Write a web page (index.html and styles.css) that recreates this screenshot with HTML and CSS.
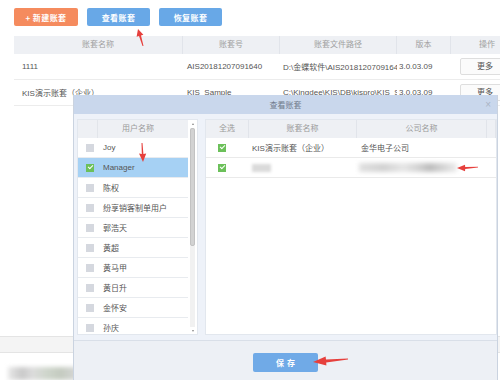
FILE: index.html
```html
<!DOCTYPE html>
<html lang="zh-CN">
<head>
<meta charset="utf-8">
<title>账套管理</title>
<link rel="stylesheet" href="styles.css">
</head>
<body>
<div class="page">
  <div class="toolbar">
    <button class="btn btn-orange">+ 新建账套</button>
    <button class="btn btn-blue">查看账套</button>
    <button class="btn btn-blue">恢复账套</button>
  </div>
  <div class="grid">
    <div class="grid-head">
      <span>账套名称</span><span>账套号</span><span>账套文件路径</span><span>版本</span><span>操作</span>
    </div>
    <div class="grid-row">
      <span class="c1">1111</span>
      <span class="c2">AIS20181207091640</span>
      <span class="c3">D:\金蝶软件\AIS20181207091640</span>
      <span class="c4">3.0.03.09</span>
      <span class="c5"><span class="more">更多</span></span>
    </div>
    <div class="grid-row">
      <span class="c1">KIS演示账套（企业）</span>
      <span class="c2">KIS_Sample</span>
      <span class="c3">C:\Kingdee\KIS\DB\kispro\KIS_Sample</span>
      <span class="c4">3.0.03.09</span>
      <span class="c5"><span class="more">更多</span></span>
    </div>
  </div>
  <div class="status">
    <div class="status-band"></div>
    <div class="status-blur"></div>
  </div>
</div>

<div class="dialog">
  <div class="dlg-title">
    <span></span>
    <span class="dlg-name">查看账套</span>
    <span class="dlg-close">×</span>
  </div>
  <div class="dlg-body">
    <div class="panel users">
      <div class="user-list">
        <div class="uhead"><span class="uhead-cb"></span><span class="uhead-name">用户名称</span></div>
        <div class="urow"><i class="cb"></i><span>Joy</span></div>
        <div class="urow selected"><i class="cb on"></i><span>Manager</span></div>
        <div class="urow"><i class="cb"></i><span>陈权</span></div>
        <div class="urow"><i class="cb"></i><span>纷享销客制单用户</span></div>
        <div class="urow"><i class="cb"></i><span>郭浩天</span></div>
        <div class="urow"><i class="cb"></i><span>黄超</span></div>
        <div class="urow"><i class="cb"></i><span>黄马甲</span></div>
        <div class="urow"><i class="cb"></i><span>黄日升</span></div>
        <div class="urow"><i class="cb"></i><span>金怀安</span></div>
        <div class="urow"><i class="cb"></i><span>孙庆</span></div>
      </div>
      <div class="scroll">
        <span class="arrow-up"></span>
        <div class="track"><div class="thumb"></div></div>
        <span class="arrow-down"></span>
      </div>
    </div>
    <div class="panel books">
      <div class="bhead"><span>全选</span><span>账套名称</span><span>公司名称</span><span></span></div>
      <div class="brow"><span class="bcb"><i class="cb on"></i></span><span class="bname">KIS演示账套（企业）</span><span class="bcomp">金华电子公司</span><span></span></div>
      <div class="brow"><span class="bcb"><i class="cb on"></i></span><span class="bname"><i class="blur-a"></i></span><span class="bcomp"><i class="blur-b"></i></span><span></span></div>
    </div>
  </div>
  <div class="dlg-foot">
    <button class="save">保存</button>
  </div>
</div>

<svg class="marks" width="500" height="380" viewBox="0 0 500 380">
  <polygon points="138,29 143.4,34.7 141,35.4 143.5,45.9 142.5,46.1 139,36 136.6,36.7"/>
  <polygon points="143,162 146.2,153.5 143.4,154 142.5,143 141.5,143 141.8,154 139,153.5"/>
  <polygon points="457,168 465,164.8 465.2,167.1 478,166.7 478,167.4 465.2,168.9 465,171.2"/>
  <polygon points="313,362 325.6,356.4 326,359.6 348,358.6 348,359.6 326.2,362.5 326.4,365.6"/>
</svg>
</body>
</html>
```

FILE: styles.css
```css
* { box-sizing: border-box; margin: 0; padding: 0; }
html, body { width: 500px; height: 380px; overflow: hidden; background: #fff; }
body {
  position: relative;
  font-family: "Liberation Sans", "Noto Sans CJK SC", sans-serif;
  font-size: 8px;
  color: #555;
}
.page { height: 380px; display: flex; flex-direction: column; }

.toolbar { display: flex; gap: 9px; padding: 8px 0 0 14px; height: 36px; }
.btn {
  height: 18px; border: none; border-radius: 2px; color: #fff;
  font-family: "Noto Sans CJK SC", sans-serif; font-weight: bold; font-size: 8px;
  letter-spacing: 0.4px;
}
.btn-orange { width: 64px; background: #f58b5e; }
.btn-blue { width: 63px; background: #68a8e7; }

.grid { margin-left: 14px; width: 510px; }
.grid-head, .grid-row { display: grid; grid-template-columns: 169px 97px 117px 54px 73px; }
.grid-head { height: 18px; background: #eef0f4; color: #a0a0a0; text-align: center; }
.grid-head span { line-height: 18px; border-right: 1px solid #e1e4ea; }
.grid-row { height: 26px; border-bottom: 1px solid #ececec; align-items: center; }
.grid-row > span { white-space: nowrap; overflow: hidden; }
.c1 { padding-left: 8px; }
.c2 { padding-left: 4px; }
.c3 { padding-left: 3px; }
.c4 { padding-left: 2px; }
.c5 { padding-left: 9px; }
.more {
  display: block; width: 50px; height: 17px; line-height: 15px; text-align: center;
  border: 1px solid #dedede; border-radius: 2px; background: #fbfbfb; color: #555;
}

.status { margin-top: auto; }
.status-band { height: 17px; border-top: 1px solid #e4e4e4; border-bottom: 1px solid #e4e4e4; background: #f4f4f4; }
.status-blur {
  margin: 14px 0 0 8px; width: 70px; height: 13px; filter: blur(2px);
  background: linear-gradient(90deg, #e8e8e8, #c9c9c9 20%, #dcdcdc 35%, #cfd6cc 55%, #c4cbc0 75%, #d8d8d8);
}

.dialog {
  position: absolute; left: 73px; top: 95px; width: 425px; height: 290px;
  border: 1px solid #cad3e0; border-top: none; background: #eef2f9;
  display: flex; flex-direction: column;
}
.dlg-title {
  height: 19px; background: #c9d7ec; display: grid; grid-template-columns: 1fr auto 1fr;
  align-items: center; color: #6f7a8a;
}
.dlg-name { font-size: 8px; }
.dlg-close { justify-self: end; padding-right: 6px; color: #a9b4c5; font-size: 10px; }

.dlg-body { display: flex; gap: 7px; padding: 5px 0 5px 3px; height: 226px; }
.panel { background: #fff; border: 1px solid #e2e7ee; height: 216px; overflow: hidden; }

.users { width: 121px; display: flex; }
.user-list { width: 110px; }
.uhead { height: 18px; background: #eef0f4; display: grid; grid-template-columns: 20px 1fr; color: #9a9a9a; }
.uhead-cb { border-right: 1px solid #e2e5ea; }
.uhead-name { line-height: 18px; text-align: center; padding-right: 10px; }
.urow {
  height: 20px; display: flex; align-items: center; padding-left: 8px;
  border-bottom: 1px solid #e8ebef; color: #555;
}
.urow .cb { margin-right: 9px; }
.urow.selected { background: #a6d1f4; }

.cb { display: block; width: 8px; height: 8px; background: #d5d8df; position: relative; flex: none; }
.cb.on { background: #6cc05a; }
.cb.on::after {
  content: ""; position: absolute; left: 2.5px; top: 0.8px; width: 2px; height: 4px;
  border: solid #fff; border-width: 0 1px 1px 0; transform: rotate(45deg);
}

.scroll { width: 9px; padding: 2px 2px 1px 2px; display: flex; flex-direction: column; align-items: center; }
.arrow-up, .arrow-down { width: 0; height: 0; border-left: 1.5px solid transparent; border-right: 1.5px solid transparent; flex: none; }
.arrow-up { border-bottom: 2px solid #888; margin: 1px 0 3px; }
.arrow-down { border-top: 2px solid #888; margin: 3px 0 1px; }
.track { flex: 1; width: 5px; background: #f1f1f1; }
.thumb { height: 118px; background: #d2d2d2; border: 1px solid #c2c2c2; border-radius: 2px; }

.books { width: 292px; }
.bhead, .brow { display: grid; grid-template-columns: 43px 108px 130px 1fr; }
.bhead { height: 18px; background: #eef0f4; color: #9a9a9a; text-align: center; }
.bhead span { line-height: 18px; border-right: 1px solid #e1e4ea; }
.brow { height: 20px; border-bottom: 1px solid #eaeaea; align-items: center; color: #555; }
.bcb { padding-left: 12px; }
.bname { padding-left: 3px; white-space: nowrap; }
.bcomp { padding-left: 4px; white-space: nowrap; }
.blur-a { display: block; width: 19px; height: 8px; background: #dadada; filter: blur(1.5px); }
.blur-b {
  display: block; width: 98px; height: 9px; margin-left: -2px; filter: blur(2px);
  background: linear-gradient(90deg, #e0e0e0, #d2d2d2 25%, #e6e6e6 45%, #d4d4d4 60%, #bdbdbd 72%, #d3d3d3 85%, #ececec);
}

.dlg-foot {
  flex: 1; border-top: 1px solid #d9dfe8; background: #edf0f5;
  display: flex; justify-content: center; padding-top: 12px;
}
.save {
  width: 65px; height: 19px; border: none; border-radius: 2px; background: #70aae7; color: #fff;
  font-family: "Noto Sans CJK SC", sans-serif; font-weight: bold; font-size: 8px; letter-spacing: 3px;
  padding-left: 3px;
}

.marks { position: absolute; left: 0; top: 0; pointer-events: none; }
.marks polygon { fill: #e6403d; }
```
